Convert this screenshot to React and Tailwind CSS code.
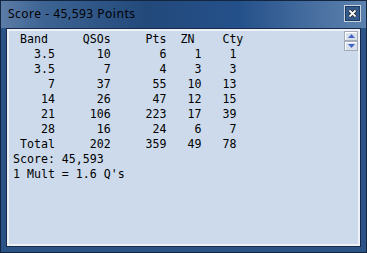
import React from "react";

const rows = [
  ["3.5", 10, 6, 1, 1],
  ["3.5", 7, 4, 3, 3],
  ["7", 37, 55, 10, 13],
  ["14", 26, 47, 12, 15],
  ["21", 106, 223, 17, 39],
  ["28", 16, 24, 6, 7],
  ["Total", 202, 359, 49, 78],
];

const fmt = (r) =>
  String(r[0]).padStart(6) +
  String(r[1]).padStart(8) +
  String(r[2]).padStart(8) +
  String(r[3]).padStart(5) +
  String(r[4]).padStart(5);

const SpinButton = ({ up }) => (
  <div className="h-[10px] w-[14px] border border-[#a3acb8] bg-[#d9e1ec] shadow-[inset_1px_1px_0_#ffffff] flex items-center justify-center">
    <svg width="7" height="4" viewBox="0 0 7 4">
      {up ? (
        <polygon points="0,4 7,4 3.5,0" fill="#4364c4" />
      ) : (
        <polygon points="0,0 7,0 3.5,4" fill="#4364c4" />
      )}
    </svg>
  </div>
);

export default function App() {
  return (
    <div className="w-[367px] h-[253px] border border-[#142540] bg-[#2b5385] flex flex-col overflow-hidden">
      {/* title bar */}
      <div className="h-[27px] shrink-0 flex items-start justify-between pl-[7px] pr-[5px] pt-[4px] bg-[linear-gradient(to_right,#5b7ca6_0%,#3d6393_12%,#23497b_40%,#24508a_65%,#4b72a2_88%,#5b81ae_100%)]">
        <span className="mt-[1px] font-['Noto_Sans',sans-serif] text-[12px] leading-[16px] tracking-[0.5px] text-black">
          Score - 45,593 Points
        </span>
        <div className="w-[17px] h-[17px] border border-[#c9d3e0] bg-[#34598b] shadow-[inset_0_0_0_1px_#1d3a62] flex items-center justify-center">
          <svg width="9" height="9" viewBox="0 0 9 9">
            <path d="M1.5 1.5 L7.5 7.5 M7.5 1.5 L1.5 7.5" stroke="#1a1a1a" strokeWidth="3.2" />
            <path d="M1.5 1.5 L7.5 7.5 M7.5 1.5 L1.5 7.5" stroke="#ffffff" strokeWidth="1.8" />
          </svg>
        </div>
      </div>

      {/* client area */}
      <div className="flex-1 mx-[5px] mb-[5px] border border-[#17294a] flex">
        <div className="flex-1 border-2 border-[#eef2f7] bg-[#ccdaeb] flex">
          <pre className="flex-1 pl-[4px] pt-[1px] font-['DejaVu_Sans_Mono',monospace] text-[11.6px] leading-[15px] text-black whitespace-pre">
            {" Band     QSOs     Pts  ZN    Cty"}
            {"\n"}
            {rows.map((r) => fmt(r)).join("\n")}
            {"\n"}
            {"Score: 45,593"}
            {"\n"}
            {"1 Mult = 1.6 Q's"}
          </pre>
          <div className="w-[14px] flex flex-col">
            <SpinButton up />
            <SpinButton />
          </div>
        </div>
      </div>
    </div>
  );
}
